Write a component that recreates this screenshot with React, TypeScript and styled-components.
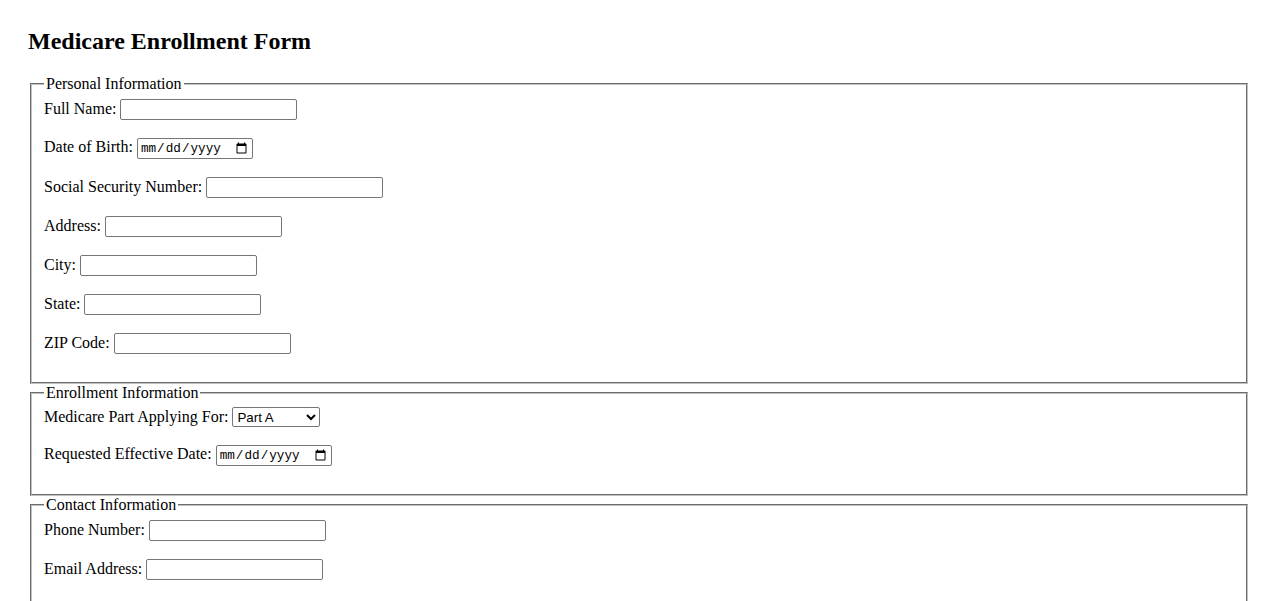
import React from "react";
import styled, { createGlobalStyle } from "styled-components";

const Global = createGlobalStyle`
  html, body { margin: 0; padding: 0; background: #fff; }
  body { font-family: "Liberation Serif", "Times New Roman", serif; font-size: 16px; color: #000; }
`;

const Page = styled.div`
  padding: 28px 28px 0;
`;

const Title = styled.h2`
  font-size: 24px;
  font-weight: bold;
  margin: 0 0 20px;
`;

const Group = styled.fieldset`
  margin: 0 2px;
  padding: 5.6px 12px 10px;
  border: 2px groove #c0c0c0;
`;

const Legend = styled.legend`
  padding: 0 2px;
`;

const Row = styled.div`
  margin-bottom: 18px;
`;

const Label = styled.label`
  margin-right: 4px;
`;

const TextInput = styled.input`
  box-sizing: border-box;
  width: 177px;
  height: 21px;
  padding: 1px 2px;
  border: 1px solid #767676;
  border-radius: 2px;
  font: 13.33px Arial, "Liberation Sans", sans-serif;
  vertical-align: baseline;
`;

const DateInput = styled.input`
  box-sizing: border-box;
  width: 116px;
  height: 21px;
  padding: 1px 2px;
  border: 1px solid #767676;
  border-radius: 2px;
  font: 12.67px "Liberation Mono", monospace;
`;

const Select = styled.select`
  box-sizing: border-box;
  width: 88px;
  height: 20px;
  border: 1px solid #767676;
  border-radius: 2px;
  font: 13.33px Arial, "Liberation Sans", sans-serif;
  background: #fff;
`;

const Field: React.FC<{ label: string; type?: string; id: string }> = ({ label, type = "text", id }) => (
  <Row>
    <Label htmlFor={id}>{label}</Label>
    {type === "date" ? <DateInput id={id} type="date" /> : <TextInput id={id} type={type} />}
  </Row>
);

export default function App() {
  return (
    <Page>
      <Global />
      <Title>Medicare Enrollment Form</Title>
      <form>
        <Group>
          <Legend>Personal Information</Legend>
          <Field id="name" label="Full Name:" />
          <Field id="dob" label="Date of Birth:" type="date" />
          <Field id="ssn" label="Social Security Number:" />
          <Field id="address" label="Address:" />
          <Field id="city" label="City:" />
          <Field id="state" label="State:" />
          <Field id="zip" label="ZIP Code:" />
        </Group>
        <Group>
          <Legend>Enrollment Information</Legend>
          <Row>
            <Label htmlFor="part">Medicare Part Applying For:</Label>
            <Select id="part" defaultValue="A">
              <option value="A">Part A</option>
              <option value="B">Part B</option>
              <option value="C">Part C</option>
              <option value="D">Part D</option>
            </Select>
          </Row>
          <Field id="effective" label="Requested Effective Date:" type="date" />
        </Group>
        <Group>
          <Legend>Contact Information</Legend>
          <Field id="phone" label="Phone Number:" type="tel" />
          <Field id="email" label="Email Address:" type="email" />
        </Group>
      </form>
    </Page>
  );
}
